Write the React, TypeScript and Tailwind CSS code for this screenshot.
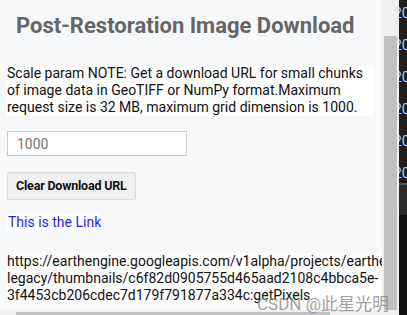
import React from 'react';

const rows = [0, 1, 2, 3, 4, 5];

const App: React.FC = () => {
  return (
    <div
      className="relative flex h-[315px] w-[407px] overflow-hidden bg-[#1e1e1e]"
      style={{ fontFamily: 'Roboto, "Noto Sans CJK SC", sans-serif' }}
    >
      <div className="flex w-[399px] flex-col">
        <div className="flex h-[310px]">
          {/* panel */}
          <div className="w-[382px] overflow-hidden bg-[#f7f8fa]">
            <h1 className="whitespace-nowrap pl-[16px] pt-[12px] text-[22px] font-bold leading-[27px] text-[#666]">
              Post-Restoration Image Download
            </h1>
            <div className="ml-[6px] mt-[26px] w-[368px] bg-white pl-[1px] text-[14px] leading-[17px] text-[#111]">
              Scale param NOTE: Get a download URL for small chunks of image data in GeoTIFF or NumPy
              format.Maximum request size is 32 MB, maximum grid dimension is 1000.
            </div>
            <input
              readOnly
              value="1000"
              className="ml-[7px] mt-[15px] block h-[25px] w-[180px] border border-[#ccc] bg-white px-[9px] text-[14px] text-[#777] outline-none"
            />
            <button className="ml-[7px] mt-[16px] block h-[28px] rounded-[2px] border border-[#ddd] bg-[#f0f0f0] px-[8px] text-[12.5px] font-bold tracking-[-0.2px] text-[#111]">
              Clear Download URL
            </button>
            <div className="ml-[7px] mt-[13px] inline-block bg-white px-[1px] text-[14px] leading-[19px] text-[#2a1ff5]">
              This is the Link
            </div>
            <div className="ml-[7px] mt-[19px] w-[400px] whitespace-nowrap bg-white text-[14px] leading-[17px] text-[#111]">
              https://earthengine.googleapis.com/v1alpha/projects/earthengine-
              <br />
              legacy/thumbnails/c6f82d0905755d465aad2108c4bbca5e-
              <br />
              3f4453cb206cdec7d179f791877a334c:getPixels
            </div>
          </div>
          {/* vertical scrollbar */}
          <div className="w-[17px] bg-[#f0f0f0] pl-[2px] pt-[36px]">
            <div className="h-[274px] w-[13px] bg-[#c1c1c1]" />
          </div>
        </div>
        {/* horizontal scrollbar */}
        <div className="h-[5px] bg-[#f0f0f0] pl-[16px] pt-[2px]">
          <div className="h-[3px] w-[314px] bg-[#c1c1c1]" />
        </div>
      </div>
      {/* editor sliver */}
      <div className="flex w-[8px] flex-col overflow-hidden">
        <div className="h-[183px] bg-[#1e1e1e] pt-[4px]">
          {rows.map((r) => (
            <div key={r} className="ml-[-5px] h-[32px] whitespace-nowrap text-[14px] leading-[18px] text-[#9cdcfe]">
              20
            </div>
          ))}
        </div>
        <div className="h-[2px] bg-[#555]" />
        <div className="h-[30px] bg-[#2a2a2a]" />
        <div className="flex-1 bg-[#111]" />
      </div>
      <div className="pointer-events-none absolute left-[257px] top-[294px] whitespace-nowrap text-[17px] leading-[20px] text-[#8a8a8a]/80">
        CSDN @此星光明
      </div>
    </div>
  );
};

export default App;
